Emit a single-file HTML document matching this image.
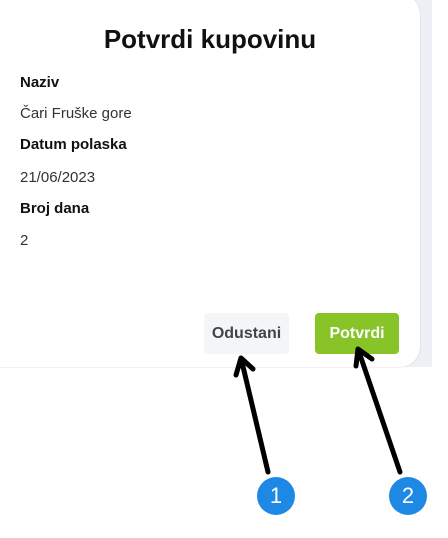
<!DOCTYPE html>
<html><head><meta charset="utf-8"><style>
body{margin:0;width:448px;height:538px;background:#fff;position:relative;overflow:hidden;font-family:"Liberation Sans",sans-serif;}
.strip{position:absolute;left:405px;top:0;width:27px;height:367px;background:#eef0f6;}
.card{position:absolute;left:-20px;top:-6px;width:440px;height:373px;background:#fff;border-radius:20px;box-shadow:0 0 1px #aaa;}
h1{position:absolute;left:0;width:420px;top:24px;margin:0;text-align:center;font-size:26px;font-weight:bold;color:#111;}
.l{position:absolute;left:20px;font-size:15px;font-weight:bold;color:#111;}
.v{position:absolute;left:20px;font-size:15px;color:#333;}
.b{position:absolute;top:313px;height:41px;border-radius:4px;font-size:16px;font-weight:bold;display:flex;align-items:center;justify-content:center;}
.c{position:absolute;width:38px;height:38px;border-radius:50%;background:#1e88e5;color:#fff;font-size:22px;display:flex;align-items:center;justify-content:center;}
</style></head><body>
<div class="strip"></div>
<div class="card"></div>
<h1>Potvrdi kupovinu</h1>
<div class="l" style="top:74px">Naziv</div>
<div class="v" style="top:105px">Čari Fruške gore</div>
<div class="l" style="top:136px">Datum polaska</div>
<div class="v" style="top:169px">21/06/2023</div>
<div class="l" style="top:200px">Broj dana</div>
<div class="v" style="top:232px">2</div>
<div class="b" style="left:204px;width:85px;background:#f4f5f7;color:#444">Odustani</div>
<div class="b" style="left:315px;width:84px;background:#88c428;color:#fff">Potvrdi</div>
<svg style="position:absolute;left:0;top:0" width="448" height="538">
<g stroke="#000" stroke-width="5" fill="none" stroke-linecap="round" stroke-linejoin="round">
<path d="M268 472 L241 358 M236 375 L241 358 L253 369"/>
<path d="M400 472 L358 349 M356 366 L358 349 L372 359"/>
</g></svg>
<div class="c" style="left:257px;top:477px">1</div>
<div class="c" style="left:389px;top:477px">2</div>
</body></html>
